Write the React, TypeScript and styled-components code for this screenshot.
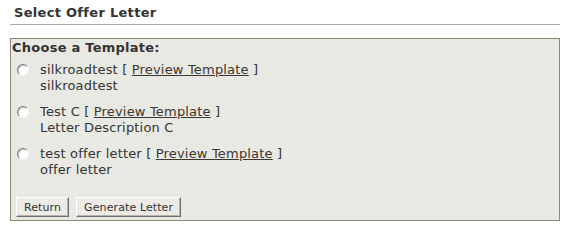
import styled, { createGlobalStyle } from 'styled-components'

const GlobalStyle = createGlobalStyle`
    body {
        margin: 0;
        background: #fff;
        font-family: 'DejaVu Sans', Verdana, sans-serif;
        color: #333;
    }
`

const templates = [
    { name: 'silkroadtest', description: 'silkroadtest' },
    { name: 'Test C', description: 'Letter Description C' },
    { name: 'test offer letter', description: 'offer letter' },
]

const Page = styled.div`
    padding: 0 6px 0 10px;
`

const Header = styled.h2`
    margin: 0;
    padding: 5px 0 0 4px;
    height: 19px;
    font-size: 13px;
    font-weight: bold;
    letter-spacing: 0.3px;
    line-height: 16px;
    color: #333;
    border-bottom: 1px solid #aaa;
`

const Panel = styled.div`
    margin-top: 13px;
    width: 548px;
    height: 181px;
    border: 1px solid #8c8677;
    background: #e9e9e3;
    display: flex;
    flex-direction: column;
`

const Legend = styled.div`
    font-size: 13px;
    font-weight: bold;
    letter-spacing: 0.25px;
    line-height: 16px;
    padding: 1px 0 0 1px;
`

const OptionList = styled.div`
    display: flex;
    flex-direction: column;
    gap: 10px;
    padding: 6px 0 0 6px;
`

const Option = styled.label`
    display: flex;
    gap: 11px;
    font-size: 13px;
    letter-spacing: 0.18px;
    line-height: 16px;
`

const Radio = styled.span`
    flex: none;
    width: 10px;
    height: 10px;
    margin-top: 2px;
    border-radius: 50%;
    border: 1px solid;
    border-color: #7a7a7a #f4f4f4 #f4f4f4 #7a7a7a;
    background: #fff;
    box-shadow: inset 1px 1px 0 #c8c8c8;
`

const OptionText = styled.div`
    display: flex;
    flex-direction: column;
`

const PreviewLink = styled.a`
    color: #3d3530;
    text-decoration: underline;
`

const ButtonRow = styled.div`
    display: flex;
    gap: 7px;
    margin-top: auto;
    padding: 0 0 3px 5px;
`

const Button = styled.button`
    font-family: 'DejaVu Sans', Verdana, sans-serif;
    font-size: 11px;
    letter-spacing: 0.1px;
    color: #333;
    height: 20px;
    padding: 0 7px;
    background: #ecebe6;
    border: 1px solid;
    border-color: #fff #6e6e6e #6e6e6e #fff;
    box-shadow: inset -1px -1px 0 #b5b3ab;
`

export default function App() {
    return (
        <Page>
            <GlobalStyle />
            <Header>Select Offer Letter</Header>
            <Panel>
                <Legend>Choose a Template:</Legend>
                <OptionList>
                    {templates.map((t) => (
                        <Option key={t.name}>
                            <Radio />
                            <OptionText>
                                <span>
                                    {t.name} [ <PreviewLink href="#">Preview Template</PreviewLink> ]
                                </span>
                                <span>{t.description}</span>
                            </OptionText>
                        </Option>
                    ))}
                </OptionList>
                <ButtonRow>
                    <Button>Return</Button>
                    <Button>Generate Letter</Button>
                </ButtonRow>
            </Panel>
        </Page>
    )
}
